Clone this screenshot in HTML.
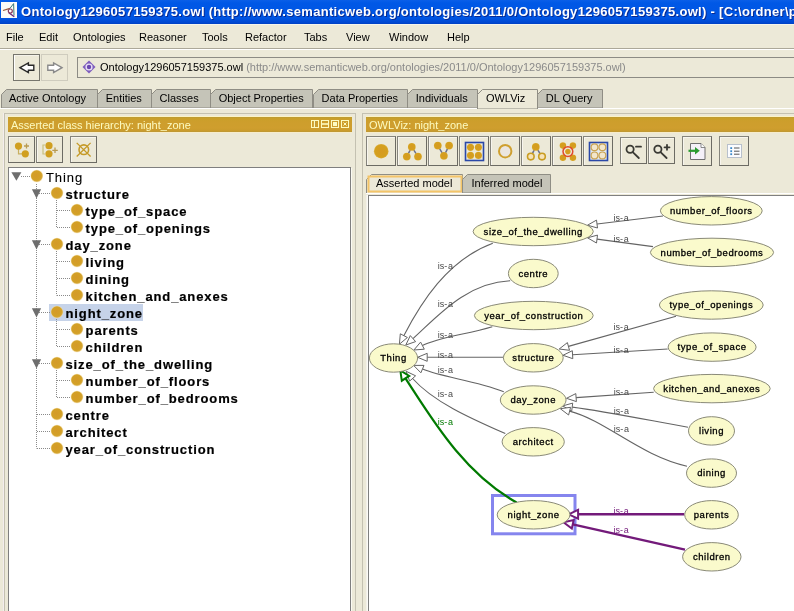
<!DOCTYPE html>
<html><head><meta charset="utf-8">
<style>
*{margin:0;padding:0;box-sizing:border-box}
body{will-change:transform}
html,body{width:794px;height:611px;overflow:hidden;background:#ece9d8;font-family:"Liberation Sans",sans-serif;font-size:11px;color:#000}
.a{position:absolute}
#title{left:0;top:0;width:794px;height:24px;background:linear-gradient(#0a5fe8 0,#0058e6 3px,#0055e3 18px,#0046cf 23px,#0040c0 24px)}
#title .t{left:21px;top:4px;font-weight:bold;font-size:13px;color:#fff;white-space:nowrap;letter-spacing:0.3px;text-shadow:1px 1px 0 #0a2a90}
.menu{top:30.7px;line-height:13px;white-space:nowrap}
.tab{top:89px;height:19px;background:#c6c5b9;border-top:1px solid #8f8e85;border-right:1px solid #8f8e85;white-space:nowrap}
.tab span{position:absolute;top:3px}
.tree{font-weight:bold;font-size:13px;letter-spacing:0.88px;white-space:nowrap;-webkit-text-stroke:0.2px #000}
.dot{width:13px;height:13px;border-radius:50%;background:#d19f2c;box-shadow:0 0 0 0.5px #e8c77a}
</style></head><body>
<!-- title bar -->
<div id="title" class="a">
  <svg class="a" style="left:1px;top:2px" width="16" height="16" viewBox="0 0 16 16">
    <rect x="0" y="0" width="16" height="16" fill="#fbfbf8"/>
    <path d="M2 8.5 L9 6.3" stroke="#9a5a3a" stroke-width="1.3" fill="none"/>
    <path d="M9 6.3 L12.6 1.6 L13 13.5" stroke="#3a7a7a" stroke-width="1" fill="none"/>
    <path d="M7.5 10.5 L13.3 14.8" stroke="#6a2a7a" stroke-width="1.4" fill="none"/>
    <circle cx="9.3" cy="9" r="2" fill="#fff" stroke="#8a3a5a" stroke-width="1.2"/>
  </svg>
  <div class="a t">Ontology1296057159375.owl (http://www.semanticweb.org/ontologies/2011/0/Ontology1296057159375.owl) - [C:\ordner\protege</div>
</div>
<div class="a" style="left:0;top:24px;width:794px;height:1px;background:#f6f4ec"></div>
<!-- menu -->
<div class="a menu" style="left:6px">File</div>
<div class="a menu" style="left:39px">Edit</div>
<div class="a menu" style="left:73px">Ontologies</div>
<div class="a menu" style="left:139px">Reasoner</div>
<div class="a menu" style="left:202px">Tools</div>
<div class="a menu" style="left:245px">Refactor</div>
<div class="a menu" style="left:304px">Tabs</div>
<div class="a menu" style="left:346px">View</div>
<div class="a menu" style="left:389px">Window</div>
<div class="a menu" style="left:447px">Help</div>
<div class="a" style="left:0;top:48px;width:794px;height:1px;background:#aca899"></div>
<div class="a" style="left:0;top:49px;width:794px;height:1px;background:#fff"></div>
<!-- nav buttons -->
<div class="a" style="left:13px;top:54px;width:27px;height:27px;border:1px solid #77766e;"></div>
<div class="a" style="left:14px;top:55px;width:25px;height:25px;border-left:1px solid #fff;border-top:1px solid #f4f2ea;"></div>
<svg class="a" style="left:18px;top:59px" width="18" height="18" viewBox="0 0 18 18"><path d="M2 8.7 L10.4 3.9 V6.2 H15.8 V11.2 H10.4 V13.5 Z" fill="#fff" stroke="#2a2a2a" stroke-width="1.4" stroke-linejoin="miter"/></svg>
<div class="a" style="left:41px;top:54px;width:27px;height:27px;border:1px solid #cfccbe;"></div>
<svg class="a" style="left:44px;top:59px" width="20" height="18" viewBox="0 0 20 18"><path d="M18 8.7 L9.6 3.9 V6.2 H3.8 V11.2 H9.6 V13.5 Z" fill="#fff" stroke="#8a8a8a" stroke-width="1.4" stroke-linejoin="miter"/></svg>
<!-- address -->
<div class="a" style="left:77px;top:57px;width:717px;height:21px;border-top:1px solid #8c8b84;border-left:1px solid #8c8b84;border-bottom:1px solid #8c8b84;background:#ece9d8"></div>

<svg class="a" style="left:82px;top:60px" width="14" height="14" viewBox="0 0 14 14"><path d="M7 0.5 L13.5 7 L7 13.5 L0.5 7 Z" fill="#7e5dbd"/><circle cx="7" cy="7" r="3.6" fill="#e8e0f5"/><circle cx="7" cy="7" r="2.2" fill="#6a48b0"/></svg>
<div class="a" style="left:100px;top:61px;white-space:nowrap">Ontology1296057159375.owl <span style="color:#8a8a8a">(http://www.semanticweb.org/ontologies/2011/0/Ontology1296057159375.owl)</span></div>
<!-- tabs -->
<div class="a" style="left:0;top:108px;width:794px;height:1px;background:#fff"></div>
<svg class="a" style="left:1px;top:89px" width="97" height="19"><polygon points="0.5,19 0.5,5.5 5.5,0.5 96.5,0.5 96.5,19" fill="#c5c4b8" stroke="#8f8d84" stroke-width="1"/></svg>
<svg class="a" style="left:97px;top:89px" width="55" height="19"><polygon points="0.5,19 0.5,5.5 5.5,0.5 54.5,0.5 54.5,19" fill="#c5c4b8" stroke="#8f8d84" stroke-width="1"/></svg>
<svg class="a" style="left:151px;top:89px" width="60" height="19"><polygon points="0.5,19 0.5,5.5 5.5,0.5 59.5,0.5 59.5,19" fill="#c5c4b8" stroke="#8f8d84" stroke-width="1"/></svg>
<svg class="a" style="left:210px;top:89px" width="103" height="19"><polygon points="0.5,19 0.5,5.5 5.5,0.5 102.5,0.5 102.5,19" fill="#c5c4b8" stroke="#8f8d84" stroke-width="1"/></svg>
<svg class="a" style="left:313px;top:89px" width="95" height="19"><polygon points="0.5,19 0.5,5.5 5.5,0.5 94.5,0.5 94.5,19" fill="#c5c4b8" stroke="#8f8d84" stroke-width="1"/></svg>
<svg class="a" style="left:407px;top:89px" width="71" height="19"><polygon points="0.5,19 0.5,5.5 5.5,0.5 70.5,0.5 70.5,19" fill="#c5c4b8" stroke="#8f8d84" stroke-width="1"/></svg>
<svg class="a" style="left:477px;top:89px" width="61" height="20"><polygon points="0.5,20 0.5,5.5 5.5,0.5 60.5,0.5 60.5,20" fill="#ece9d8" stroke="#8f8d84" stroke-width="1"/></svg>
<svg class="a" style="left:537px;top:89px" width="66" height="19"><polygon points="0.5,19 0.5,5.5 5.5,0.5 65.5,0.5 65.5,19" fill="#c5c4b8" stroke="#8f8d84" stroke-width="1"/></svg>
<div class="a" style="left:9px;top:92.3px;line-height:13px;white-space:nowrap">Active Ontology</div>
<div class="a" style="left:105.7px;top:92.3px;line-height:13px;white-space:nowrap">Entities</div>
<div class="a" style="left:159.6px;top:92.3px;line-height:13px;white-space:nowrap">Classes</div>
<div class="a" style="left:218.7px;top:92.3px;line-height:13px;white-space:nowrap">Object Properties</div>
<div class="a" style="left:321.6px;top:92.3px;line-height:13px;white-space:nowrap">Data Properties</div>
<div class="a" style="left:415.8px;top:92.3px;line-height:13px;white-space:nowrap">Individuals</div>
<div class="a" style="left:485.9px;top:92.3px;line-height:13px;white-space:nowrap">OWLViz</div>
<div class="a" style="left:545.8px;top:92.3px;line-height:13px;white-space:nowrap">DL Query</div>
<!-- LEFT PANEL -->
<div class="a" style="left:4px;top:113px;width:352px;height:500px;border:1px solid #c4c1b1;border-bottom:none"></div>
<div class="a" style="left:3px;top:113px;width:1px;height:500px;background:#f4eeee"></div>
<div class="a" style="left:8px;top:116px;width:344px;height:1px;background:#fbf3c8"></div>
<div class="a" style="left:8px;top:117px;width:344px;height:15px;background:linear-gradient(#b89838 0,#c8a02a 1px,#cd9e2c 4px,#cf9e2e 11px,#c99b2c 14px,#b8963a 15px)"></div>
<div class="a" style="left:8px;top:132px;width:344px;height:1px;background:#f6eccc"></div>
<div class="a" style="left:11px;top:118.6px;line-height:13px;color:#fdfbc0;white-space:nowrap">Asserted class hierarchy: night_zone</div>
<svg class="a" style="left:311px;top:120px" width="38" height="8" viewBox="0 0 38 8">
 <g fill="none" stroke="#fdfbc0" stroke-width="1">
  <rect x="0.5" y="0.5" width="7" height="7"/><line x1="3.5" y1="1" x2="3.5" y2="7" stroke-width="1.2"/><line x1="4.5" y1="1" x2="4.5" y2="7" stroke="#c09a3a"/>
  <rect x="10.5" y="0.5" width="7" height="7"/><line x1="11" y1="4" x2="17" y2="4" stroke-width="1.6"/>
  <rect x="20.5" y="0.5" width="7" height="7"/><rect x="22.5" y="2.5" width="3" height="3" fill="#fdfbc0"/>
  <rect x="30.5" y="0.5" width="7" height="7"/><path d="M32.5 2.5 L35.5 5.5 M35.5 2.5 L32.5 5.5"/>
 </g>
</svg>
<!-- left toolbar -->
<div class="a" style="left:8px;top:136px;width:27px;height:27px;border:1px solid #85847c;border-right-color:#6c6b64;border-bottom-color:#6c6b64;box-shadow:inset 1px 1px 0 #f7f5ee"></div>
<div class="a" style="left:36px;top:136px;width:27px;height:27px;border:1px solid #85847c;border-right-color:#6c6b64;border-bottom-color:#6c6b64;box-shadow:inset 1px 1px 0 #f7f5ee"></div>
<div class="a" style="left:70px;top:136px;width:27px;height:27px;border:1px solid #85847c;border-right-color:#6c6b64;border-bottom-color:#6c6b64;box-shadow:inset 1px 1px 0 #f7f5ee"></div>
<svg class="a" style="left:0;top:0" width="100" height="170">
 <g fill="#d09f20">
  <path d="M18.5 146 V153.8 H25" fill="none" stroke="#c8b060" stroke-width="1.2"/>
  <circle cx="18.5" cy="146.1" r="3.6"/><circle cx="25.3" cy="153.8" r="3.6"/>
  <path d="M26.5 143.5 v5 M24 146 h5" stroke="#b89a50" stroke-width="1.3"/>
  <path d="M45 145 H43 V154 H45" fill="none" stroke="#c8c080" stroke-width="1.2"/>
  <circle cx="49" cy="145.7" r="3.6"/><circle cx="49" cy="153.8" r="3.6"/>
  <path d="M55 147.5 v5.5 M52.3 150.3 h5.5" stroke="#b89a50" stroke-width="1.3"/>
 </g>
 <g stroke="#c59a28" fill="none" stroke-width="1.6">
  <circle cx="83.8" cy="149.7" r="4.8"/>
  <path d="M76.7 142.9 L90.6 156.5 M90.6 142.9 L76.7 156.5" stroke-width="1.3"/>
 </g>
</svg>
<!-- tree area -->
<div class="a" style="left:8px;top:167px;width:343px;height:450px;background:#fff;border-left:1px solid #7f7f7f;border-top:1px solid #7f7f7f;border-right:1px solid #7f7f7f"></div>
<div class="a" style="left:49px;top:304px;width:94px;height:17px;background:#c6d3e9"></div>
<svg class="a" style="left:0;top:0" width="360" height="611"><defs><radialGradient id="gd" cx="0.45" cy="0.45" r="0.6"><stop offset="0" stop-color="#d49a28"/><stop offset="0.7" stop-color="#d3a126"/><stop offset="1" stop-color="#d9ae50"/></radialGradient></defs><line x1="36.5" y1="184" x2="36.5" y2="448.5" stroke="#8a8a8a" stroke-width="1" stroke-dasharray="1 1"/><line x1="21" y1="176.5" x2="31" y2="176.5" stroke="#8a8a8a" stroke-width="1" stroke-dasharray="1 1"/><path d="M11.4 172.2 H21.4 L16.4 180.8 Z" fill="#6e6e6e"/><circle cx="36.8" cy="176" r="6.3" fill="#f3dc9c" opacity="0.7"/><circle cx="36.8" cy="176" r="5.8" fill="url(#gd)"/><line x1="37" y1="193.5" x2="51" y2="193.5" stroke="#8a8a8a" stroke-width="1" stroke-dasharray="1 1"/><line x1="56.5" y1="200" x2="56.5" y2="227.5" stroke="#8a8a8a" stroke-width="1" stroke-dasharray="1 1"/><path d="M31.9 189.2 H41.1 L36.5 198.4 Z" fill="#6e6e6e"/><circle cx="57" cy="193" r="6.3" fill="#f3dc9c" opacity="0.7"/><circle cx="57" cy="193" r="5.8" fill="url(#gd)"/><line x1="57" y1="210.5" x2="71" y2="210.5" stroke="#8a8a8a" stroke-width="1" stroke-dasharray="1 1"/><circle cx="77" cy="210" r="6.3" fill="#f3dc9c" opacity="0.7"/><circle cx="77" cy="210" r="5.8" fill="url(#gd)"/><line x1="57" y1="227.5" x2="71" y2="227.5" stroke="#8a8a8a" stroke-width="1" stroke-dasharray="1 1"/><circle cx="77" cy="227" r="6.3" fill="#f3dc9c" opacity="0.7"/><circle cx="77" cy="227" r="5.8" fill="url(#gd)"/><line x1="37" y1="244.5" x2="51" y2="244.5" stroke="#8a8a8a" stroke-width="1" stroke-dasharray="1 1"/><line x1="56.5" y1="251" x2="56.5" y2="295.5" stroke="#8a8a8a" stroke-width="1" stroke-dasharray="1 1"/><path d="M31.9 240.2 H41.1 L36.5 249.4 Z" fill="#6e6e6e"/><circle cx="57" cy="244" r="6.3" fill="#f3dc9c" opacity="0.7"/><circle cx="57" cy="244" r="5.8" fill="url(#gd)"/><line x1="57" y1="261.5" x2="71" y2="261.5" stroke="#8a8a8a" stroke-width="1" stroke-dasharray="1 1"/><circle cx="77" cy="261" r="6.3" fill="#f3dc9c" opacity="0.7"/><circle cx="77" cy="261" r="5.8" fill="url(#gd)"/><line x1="57" y1="278.5" x2="71" y2="278.5" stroke="#8a8a8a" stroke-width="1" stroke-dasharray="1 1"/><circle cx="77" cy="278" r="6.3" fill="#f3dc9c" opacity="0.7"/><circle cx="77" cy="278" r="5.8" fill="url(#gd)"/><line x1="57" y1="295.5" x2="71" y2="295.5" stroke="#8a8a8a" stroke-width="1" stroke-dasharray="1 1"/><circle cx="77" cy="295" r="6.3" fill="#f3dc9c" opacity="0.7"/><circle cx="77" cy="295" r="5.8" fill="url(#gd)"/><line x1="37" y1="312.5" x2="51" y2="312.5" stroke="#8a8a8a" stroke-width="1" stroke-dasharray="1 1"/><line x1="56.5" y1="319" x2="56.5" y2="346.5" stroke="#8a8a8a" stroke-width="1" stroke-dasharray="1 1"/><path d="M31.9 308.2 H41.1 L36.5 317.4 Z" fill="#6e6e6e"/><circle cx="57" cy="312" r="6.3" fill="#f3dc9c" opacity="0.7"/><circle cx="57" cy="312" r="5.8" fill="url(#gd)"/><line x1="57" y1="329.5" x2="71" y2="329.5" stroke="#8a8a8a" stroke-width="1" stroke-dasharray="1 1"/><circle cx="77" cy="329" r="6.3" fill="#f3dc9c" opacity="0.7"/><circle cx="77" cy="329" r="5.8" fill="url(#gd)"/><line x1="57" y1="346.5" x2="71" y2="346.5" stroke="#8a8a8a" stroke-width="1" stroke-dasharray="1 1"/><circle cx="77" cy="346" r="6.3" fill="#f3dc9c" opacity="0.7"/><circle cx="77" cy="346" r="5.8" fill="url(#gd)"/><line x1="37" y1="363.5" x2="51" y2="363.5" stroke="#8a8a8a" stroke-width="1" stroke-dasharray="1 1"/><line x1="56.5" y1="370" x2="56.5" y2="397.5" stroke="#8a8a8a" stroke-width="1" stroke-dasharray="1 1"/><path d="M31.9 359.2 H41.1 L36.5 368.4 Z" fill="#6e6e6e"/><circle cx="57" cy="363" r="6.3" fill="#f3dc9c" opacity="0.7"/><circle cx="57" cy="363" r="5.8" fill="url(#gd)"/><line x1="57" y1="380.5" x2="71" y2="380.5" stroke="#8a8a8a" stroke-width="1" stroke-dasharray="1 1"/><circle cx="77" cy="380" r="6.3" fill="#f3dc9c" opacity="0.7"/><circle cx="77" cy="380" r="5.8" fill="url(#gd)"/><line x1="57" y1="397.5" x2="71" y2="397.5" stroke="#8a8a8a" stroke-width="1" stroke-dasharray="1 1"/><circle cx="77" cy="397" r="6.3" fill="#f3dc9c" opacity="0.7"/><circle cx="77" cy="397" r="5.8" fill="url(#gd)"/><line x1="37" y1="414.5" x2="51" y2="414.5" stroke="#8a8a8a" stroke-width="1" stroke-dasharray="1 1"/><circle cx="57" cy="414" r="6.3" fill="#f3dc9c" opacity="0.7"/><circle cx="57" cy="414" r="5.8" fill="url(#gd)"/><line x1="37" y1="431.5" x2="51" y2="431.5" stroke="#8a8a8a" stroke-width="1" stroke-dasharray="1 1"/><circle cx="57" cy="431" r="6.3" fill="#f3dc9c" opacity="0.7"/><circle cx="57" cy="431" r="5.8" fill="url(#gd)"/><line x1="37" y1="448.5" x2="51" y2="448.5" stroke="#8a8a8a" stroke-width="1" stroke-dasharray="1 1"/><circle cx="57" cy="448" r="6.3" fill="#f3dc9c" opacity="0.7"/><circle cx="57" cy="448" r="5.8" fill="url(#gd)"/></svg>
<div class="a tree" style="left:46px;top:169.6px;line-height:15px;font-weight:normal;letter-spacing:0.9px;-webkit-text-stroke:0.1px #000">Thing</div>
<div class="a tree" style="left:65.5px;top:186.6px;line-height:15px;">structure</div>
<div class="a tree" style="left:85.6px;top:203.6px;line-height:15px;">type_of_space</div>
<div class="a tree" style="left:85.6px;top:220.6px;line-height:15px;">type_of_openings</div>
<div class="a tree" style="left:65.5px;top:237.6px;line-height:15px;">day_zone</div>
<div class="a tree" style="left:85.6px;top:254.6px;line-height:15px;">living</div>
<div class="a tree" style="left:85.6px;top:271.6px;line-height:15px;">dining</div>
<div class="a tree" style="left:85.6px;top:288.6px;line-height:15px;">kitchen_and_anexes</div>
<div class="a tree" style="left:65.5px;top:305.6px;line-height:15px;">night_zone</div>
<div class="a tree" style="left:85.6px;top:322.6px;line-height:15px;">parents</div>
<div class="a tree" style="left:85.6px;top:339.6px;line-height:15px;">children</div>
<div class="a tree" style="left:65.5px;top:356.6px;line-height:15px;">size_of_the_dwelling</div>
<div class="a tree" style="left:85.6px;top:373.6px;line-height:15px;">number_of_floors</div>
<div class="a tree" style="left:85.6px;top:390.6px;line-height:15px;">number_of_bedrooms</div>
<div class="a tree" style="left:65.5px;top:407.6px;line-height:15px;">centre</div>
<div class="a tree" style="left:65.5px;top:424.6px;line-height:15px;">architect</div>
<div class="a tree" style="left:65.5px;top:441.6px;line-height:15px;">year_of_construction</div>


<div class="a" style="left:351px;top:168px;width:1px;height:450px;background:#fbfaf2"></div>
<div class="a" style="left:366px;top:195px;width:1px;height:420px;background:#f3f1ea"></div>
<div class="a" style="left:367px;top:195px;width:1px;height:420px;background:#fcfbf6"></div>
<!-- RIGHT PANEL -->
<div class="a" style="left:362px;top:113px;width:440px;height:500px;border:1px solid #c4c1b1;border-bottom:none;border-right:none"></div>
<div class="a" style="left:366px;top:116px;width:430px;height:1px;background:#fbf3c8"></div>
<div class="a" style="left:366px;top:117px;width:430px;height:15px;background:linear-gradient(#b89838 0,#c8a02a 1px,#cd9e2c 4px,#cf9e2e 11px,#c99b2c 14px,#b8963a 15px)"></div>
<div class="a" style="left:366px;top:132px;width:430px;height:1px;background:#f6eccc"></div>
<div class="a" style="left:369px;top:118.6px;line-height:13px;color:#fdfbc0;white-space:nowrap">OWLViz: night_zone</div>
<div class="a" style="left:366px;top:136px;width:30px;height:30px;border:1px solid #85847c;border-right-color:#6c6b64;border-bottom-color:#6c6b64;box-shadow:inset 1px 1px 0 #f7f5ee"></div>
<div class="a" style="left:397px;top:136px;width:30px;height:30px;border:1px solid #85847c;border-right-color:#6c6b64;border-bottom-color:#6c6b64;box-shadow:inset 1px 1px 0 #f7f5ee"></div>
<div class="a" style="left:428px;top:136px;width:30px;height:30px;border:1px solid #85847c;border-right-color:#6c6b64;border-bottom-color:#6c6b64;box-shadow:inset 1px 1px 0 #f7f5ee"></div>
<div class="a" style="left:459px;top:136px;width:30px;height:30px;border:1px solid #85847c;border-right-color:#6c6b64;border-bottom-color:#6c6b64;box-shadow:inset 1px 1px 0 #f7f5ee"></div>
<div class="a" style="left:490px;top:136px;width:30px;height:30px;border:1px solid #85847c;border-right-color:#6c6b64;border-bottom-color:#6c6b64;box-shadow:inset 1px 1px 0 #f7f5ee"></div>
<div class="a" style="left:521px;top:136px;width:30px;height:30px;border:1px solid #85847c;border-right-color:#6c6b64;border-bottom-color:#6c6b64;box-shadow:inset 1px 1px 0 #f7f5ee"></div>
<div class="a" style="left:552px;top:136px;width:30px;height:30px;border:1px solid #85847c;border-right-color:#6c6b64;border-bottom-color:#6c6b64;box-shadow:inset 1px 1px 0 #f7f5ee"></div>
<div class="a" style="left:583px;top:136px;width:30px;height:30px;border:1px solid #85847c;border-right-color:#6c6b64;border-bottom-color:#6c6b64;box-shadow:inset 1px 1px 0 #f7f5ee"></div>
<div class="a" style="left:620px;top:137px;width:27px;height:27px;border:1px solid #85847c;border-right-color:#6c6b64;border-bottom-color:#6c6b64;box-shadow:inset 1px 1px 0 #f7f5ee"></div>
<div class="a" style="left:648px;top:137px;width:27px;height:27px;border:1px solid #85847c;border-right-color:#6c6b64;border-bottom-color:#6c6b64;box-shadow:inset 1px 1px 0 #f7f5ee"></div>
<div class="a" style="left:682px;top:136px;width:30px;height:30px;border:1px solid #85847c;border-right-color:#6c6b64;border-bottom-color:#6c6b64;box-shadow:inset 1px 1px 0 #f7f5ee"></div>
<div class="a" style="left:719px;top:136px;width:30px;height:30px;border:1px solid #85847c;border-right-color:#6c6b64;border-bottom-color:#6c6b64;box-shadow:inset 1px 1px 0 #f7f5ee"></div>
<svg class="a" style="left:360px;top:130px" width="434" height="40" viewBox="360 130 434 40">
<defs><radialGradient id="g2" cx="0.5" cy="0.5" r="0.55"><stop offset="0" stop-color="#d69a20"/><stop offset="0.75" stop-color="#d4a01e"/><stop offset="1" stop-color="#e2b850"/></radialGradient></defs>
<circle cx="381.2" cy="151.2" r="7.3" fill="url(#g2)"/>
<g stroke="#6a7090" stroke-width="1.5"><path d="M411.8 146.9 L406.8 156.6 M411.8 146.9 L418 156.6"/><path d="M437.8 145.6 L443.9 155.8 M449.1 145.6 L443.9 155.8"/><path d="M535.8 146.9 L530.8 156.6 M535.8 146.9 L542 156.6"/></g>
<g fill="url(#g2)">
<circle cx="411.8" cy="146.9" r="3.9"/><circle cx="406.8" cy="156.6" r="3.9"/><circle cx="418" cy="156.6" r="3.9"/>
<circle cx="437.8" cy="145.6" r="3.9"/><circle cx="449.1" cy="145.6" r="3.9"/><circle cx="443.9" cy="155.8" r="3.9"/>
<circle cx="470.5" cy="147.3" r="3.6"/><circle cx="478.4" cy="147.3" r="3.6"/><circle cx="470.5" cy="155.4" r="3.6"/><circle cx="478.4" cy="155.4" r="3.6"/>
<circle cx="535.8" cy="146.9" r="3.9"/>
<circle cx="562.9" cy="145.6" r="3.3"/><circle cx="572.9" cy="145.6" r="3.3"/><circle cx="562.9" cy="157.7" r="3.3"/><circle cx="572.9" cy="157.7" r="3.3"/>
<circle cx="567.9" cy="151.6" r="2.8"/>
</g>
<rect x="465.5" y="142.5" width="18" height="18" fill="none" stroke="#2a48a8" stroke-width="1.6"/>
<circle cx="505.2" cy="151.2" r="6.2" fill="#ebe6e0" stroke="#cfa030" stroke-width="2"/>
<circle cx="530.8" cy="156.6" r="3.3" fill="#f6e2b8" stroke="#c99d22" stroke-width="1.6"/><circle cx="542" cy="156.6" r="3.3" fill="#f6e2b8" stroke="#c99d22" stroke-width="1.6"/>
<circle cx="567.9" cy="151.6" r="4.9" fill="none" stroke="#e04a2c" stroke-width="1.5"/>
<rect x="589.5" y="142.5" width="18" height="18" fill="#e4ecf4" stroke="#2a48a8" stroke-width="1.6"/>
<g fill="#f2e6cc" stroke="#c9a252" stroke-width="1.2"><circle cx="594.5" cy="147.3" r="3.4"/><circle cx="602.4" cy="147.3" r="3.4"/><circle cx="594.5" cy="155.4" r="3.4"/><circle cx="602.4" cy="155.4" r="3.4"/></g>
<g stroke="#3a3a34" stroke-width="1.8" fill="none" stroke-linecap="round"><circle cx="630.1" cy="149.3" r="3.6"/><path d="M633 152.3 L638.8 158"/><path d="M636 146.7 H641"/>
<circle cx="657.9" cy="149.3" r="3.6"/><path d="M660.8 152.3 L666.6 158"/><path d="M664.5 147.3 H669.5 M667 144.8 V149.8"/></g>
<path d="M690.5 143.5 H701 L705 147.5 V159.5 H690.5 Z" fill="#f4f0f8" stroke="#6f6f6f" stroke-width="1"/><path d="M701 143.5 V147.5 H705" fill="#fff" stroke="#6f6f6f" stroke-width="0.8"/>
<path d="M688.5 150.8 H696" stroke="#2a9a30" stroke-width="2.2"/><path d="M695 147 L699.8 150.8 L695 154.6 Z" fill="#2a9a30"/>
<rect x="727.5" y="144.5" width="14" height="13" fill="#fbfcff" stroke="#b8c0cc" stroke-width="1"/>
<g fill="#3a88c8"><rect x="730.3" y="147.2" width="1.8" height="1.8"/><rect x="730.3" y="150.3" width="1.8" height="1.8"/><rect x="730.3" y="153.3" width="1.8" height="1.8"/></g>
<g stroke="#555" stroke-width="1"><path d="M734 148 H739.5 M734 151.2 H739.5 M734 154.2 H739.5"/></g>
</svg>
<svg class="a" style="left:366px;top:173px" width="100" height="21"><polygon points="0.5,20.5 0.5,6.5 5.5,1.5 96.5,1.5 96.5,20.5" fill="#ece9d8" stroke="#8f8e85"/><rect x="2.5" y="3.5" width="93" height="15" fill="none" stroke="#f3c468" stroke-width="2"/></svg>
<div class="a" style="left:376px;top:176.7px;line-height:13px;white-space:nowrap">Asserted model</div>
<svg class="a" style="left:462px;top:173px" width="90" height="21"><polygon points="0.5,20 0.5,6.5 5.5,1.5 88.5,1.5 88.5,20" fill="#c5c4b8" stroke="#8f8e85"/></svg>
<div class="a" style="left:471.5px;top:176.7px;line-height:13px;white-space:nowrap">Inferred model</div>
<div class="a" style="left:366px;top:193px;width:430px;height:1px;background:#fff"></div>
<div class="a" style="left:368px;top:195px;width:430px;height:420px;background:#fff;border-left:1px solid #808080;border-top:1px solid #808080"></div>

<!--GRAPH-->
<svg class="a" style="left:0;top:0" width="794" height="611"><defs><clipPath id="gc"><rect x="369" y="196" width="425" height="415"/></clipPath></defs><g clip-path="url(#gc)">
<rect x="492.5" y="495.5" width="82.5" height="38.3" fill="none" stroke="#8585ee" stroke-width="3"/>
<path d="M663.0 216.0 L597.0 224.0" fill="none" stroke="#646464" stroke-width="1.1"/>
<polygon points="587.5,225.2 596.5,220.1 597.5,228.0" fill="#fff" stroke="#646464" stroke-width="1" stroke-linejoin="miter"/>
<text x="613.4" y="220.8" font-size="9" fill="#4a4a4a">is-<tspan dx="0.8">a</tspan></text>
<path d="M653.0 246.6 L597.0 239.1" fill="none" stroke="#646464" stroke-width="1.1"/>
<polygon points="587.5,237.8 597.5,235.1 596.5,243.0" fill="#fff" stroke="#646464" stroke-width="1" stroke-linejoin="miter"/>
<text x="613.4" y="242" font-size="9" fill="#4a4a4a">is-<tspan dx="0.8">a</tspan></text>
<path d="M492.8 243.3 C447.0 260.0 420.6 303.6 403.8 335.7" fill="none" stroke="#646464" stroke-width="1.1"/>
<polygon points="399.4,344.2 400.3,333.8 407.4,337.5" fill="#fff" stroke="#646464" stroke-width="1" stroke-linejoin="miter"/>
<text x="437.7" y="268.8" font-size="9" fill="#4a4a4a">is-<tspan dx="0.8">a</tspan></text>
<path d="M510.2 280.8 C465.5 282.6 436.0 318.1 413.0 338.6" fill="none" stroke="#646464" stroke-width="1.1"/>
<polygon points="405.8,345.0 410.3,335.6 415.6,341.6" fill="#fff" stroke="#646464" stroke-width="1" stroke-linejoin="miter"/>
<text x="437.7" y="307" font-size="9" fill="#4a4a4a">is-<tspan dx="0.8">a</tspan></text>
<path d="M492.3 326.7 C466.4 334.4 438.3 337.5 422.4 345.6" fill="none" stroke="#646464" stroke-width="1.1"/>
<polygon points="413.9,350.0 420.6,342.1 424.3,349.2" fill="#fff" stroke="#646464" stroke-width="1" stroke-linejoin="miter"/>
<text x="437.7" y="338" font-size="9" fill="#4a4a4a">is-<tspan dx="0.8">a</tspan></text>
<path d="M503.0 357.3 L427.2 357.3" fill="none" stroke="#646464" stroke-width="1.1"/>
<polygon points="417.6,357.3 427.2,353.3 427.2,361.3" fill="#fff" stroke="#646464" stroke-width="1" stroke-linejoin="miter"/>
<text x="437.7" y="357.7" font-size="9" fill="#4a4a4a">is-<tspan dx="0.8">a</tspan></text>
<path d="M503.8 391.7 C474.6 380.1 442.6 377.6 422.5 369.1" fill="none" stroke="#646464" stroke-width="1.1"/>
<polygon points="413.6,365.4 424.0,365.4 420.9,372.8" fill="#fff" stroke="#646464" stroke-width="1" stroke-linejoin="miter"/>
<text x="437.7" y="372.8" font-size="9" fill="#4a4a4a">is-<tspan dx="0.8">a</tspan></text>
<path d="M505.3 433.6 C469.2 417.8 433.0 401.5 412.6 378.5" fill="none" stroke="#646464" stroke-width="1.1"/>
<polygon points="406.2,371.3 415.6,375.8 409.6,381.1" fill="#fff" stroke="#646464" stroke-width="1" stroke-linejoin="miter"/>
<text x="437.7" y="397" font-size="9" fill="#4a4a4a">is-<tspan dx="0.8">a</tspan></text>
<path d="M516.6 502.5 C463.5 472.7 432.4 419.5 405.5 378.3" fill="none" stroke="#007a00" stroke-width="2.2"/>
<polygon points="400.3,370.3 409.2,375.9 401.8,380.7" fill="#fff" stroke="#007a00" stroke-width="2" stroke-linejoin="miter"/>
<text x="437.7" y="425" font-size="9" fill="#007a00">is-<tspan dx="0.8">a</tspan></text>
<path d="M676.0 316.3 L568.4 346.4" fill="none" stroke="#646464" stroke-width="1.1"/>
<polygon points="559.2,349.0 567.4,342.6 569.5,350.3" fill="#fff" stroke="#646464" stroke-width="1" stroke-linejoin="miter"/>
<text x="613.5" y="329.6" font-size="9" fill="#4a4a4a">is-<tspan dx="0.8">a</tspan></text>
<path d="M667.7 349.0 L572.6 354.7" fill="none" stroke="#646464" stroke-width="1.1"/>
<polygon points="563.0,355.3 572.3,350.7 572.8,358.7" fill="#fff" stroke="#646464" stroke-width="1" stroke-linejoin="miter"/>
<text x="613.5" y="352.6" font-size="9" fill="#4a4a4a">is-<tspan dx="0.8">a</tspan></text>
<path d="M653.7 392.2 L576.1 397.6" fill="none" stroke="#646464" stroke-width="1.1"/>
<polygon points="566.5,398.3 575.8,393.6 576.4,401.6" fill="#fff" stroke="#646464" stroke-width="1" stroke-linejoin="miter"/>
<text x="613.8" y="394.7" font-size="9" fill="#4a4a4a">is-<tspan dx="0.8">a</tspan></text>
<path d="M688.0 427.3 C646.3 419.8 604.8 411.3 572.2 407.1" fill="none" stroke="#646464" stroke-width="1.1"/>
<polygon points="562.7,405.9 572.7,403.1 571.7,411.1" fill="#fff" stroke="#646464" stroke-width="1" stroke-linejoin="miter"/>
<text x="613.8" y="413.9" font-size="9" fill="#4a4a4a">is-<tspan dx="0.8">a</tspan></text>
<path d="M687.0 466.2 C640.4 455.9 606.0 420.6 569.6 411.1" fill="none" stroke="#646464" stroke-width="1.1"/>
<polygon points="560.3,408.7 570.6,407.3 568.6,415.0" fill="#fff" stroke="#646464" stroke-width="1" stroke-linejoin="miter"/>
<text x="613.8" y="431.6" font-size="9" fill="#4a4a4a">is-<tspan dx="0.8">a</tspan></text>
<path d="M684.3 514.3 L578.1 514.3" fill="none" stroke="#731a7a" stroke-width="2.4"/>
<polygon points="568.6,514.3 578.1,509.9 578.1,518.7" fill="#fff" stroke="#731a7a" stroke-width="2" stroke-linejoin="miter"/>
<text x="613.4" y="514.1" font-size="9" fill="#731a7a">is-<tspan dx="0.8">a</tspan></text>
<path d="M685.0 549.6 L572.8 524.3" fill="none" stroke="#731a7a" stroke-width="2.4"/>
<polygon points="563.5,522.2 573.7,520.0 571.8,528.6" fill="#fff" stroke="#731a7a" stroke-width="2" stroke-linejoin="miter"/>
<text x="613.4" y="533.2" font-size="9" fill="#731a7a">is-<tspan dx="0.8">a</tspan></text>
<ellipse cx="533.2" cy="231.5" rx="60.1" ry="14.2" fill="#fafacc" stroke="#8a8a78" stroke-width="1"/>
<text x="533.2" y="234.6" text-anchor="middle" font-size="9.5" stroke="#000" stroke-width="0.3" letter-spacing="0.55">size_of_the_dwelling</text>
<ellipse cx="711.3" cy="210.8" rx="50.9" ry="14.2" fill="#fafacc" stroke="#8a8a78" stroke-width="1"/>
<text x="711.3" y="213.9" text-anchor="middle" font-size="9.5" stroke="#000" stroke-width="0.3" letter-spacing="0.55">number_of_floors</text>
<ellipse cx="712" cy="252.4" rx="61.6" ry="14.2" fill="#fafacc" stroke="#8a8a78" stroke-width="1"/>
<text x="712" y="255.5" text-anchor="middle" font-size="9.5" stroke="#000" stroke-width="0.3" letter-spacing="0.55">number_of_bedrooms</text>
<ellipse cx="533.3" cy="273.5" rx="24.900000000000002" ry="14.2" fill="#fafacc" stroke="#8a8a78" stroke-width="1"/>
<text x="533.3" y="276.6" text-anchor="middle" font-size="9.5" stroke="#000" stroke-width="0.3" letter-spacing="0.55">centre</text>
<ellipse cx="533.8" cy="315.5" rx="59.4" ry="14.2" fill="#fafacc" stroke="#8a8a78" stroke-width="1"/>
<text x="533.8" y="318.6" text-anchor="middle" font-size="9.5" stroke="#000" stroke-width="0.3" letter-spacing="0.55">year_of_construction</text>
<ellipse cx="393.5" cy="358" rx="24.1" ry="14.2" fill="#fafacc" stroke="#8a8a78" stroke-width="1"/>
<text x="393.5" y="361.1" text-anchor="middle" font-size="9.5" stroke="#000" stroke-width="0.3" letter-spacing="0.55">Thing</text>
<ellipse cx="533.3" cy="357.8" rx="29.900000000000002" ry="14.2" fill="#fafacc" stroke="#8a8a78" stroke-width="1"/>
<text x="533.3" y="360.90000000000003" text-anchor="middle" font-size="9.5" stroke="#000" stroke-width="0.3" letter-spacing="0.55">structure</text>
<ellipse cx="711.3" cy="305" rx="51.9" ry="14.2" fill="#fafacc" stroke="#8a8a78" stroke-width="1"/>
<text x="711.3" y="308.1" text-anchor="middle" font-size="9.5" stroke="#000" stroke-width="0.3" letter-spacing="0.55">type_of_openings</text>
<ellipse cx="712.1" cy="347.1" rx="44.0" ry="14.2" fill="#fafacc" stroke="#8a8a78" stroke-width="1"/>
<text x="712.1" y="350.20000000000005" text-anchor="middle" font-size="9.5" stroke="#000" stroke-width="0.3" letter-spacing="0.55">type_of_space</text>
<ellipse cx="533.2" cy="400" rx="32.9" ry="14.2" fill="#fafacc" stroke="#8a8a78" stroke-width="1"/>
<text x="533.2" y="403.1" text-anchor="middle" font-size="9.5" stroke="#000" stroke-width="0.3" letter-spacing="0.55">day_zone</text>
<ellipse cx="711.9" cy="388.6" rx="58.300000000000004" ry="14.2" fill="#fafacc" stroke="#8a8a78" stroke-width="1"/>
<text x="711.9" y="391.70000000000005" text-anchor="middle" font-size="9.5" stroke="#000" stroke-width="0.3" letter-spacing="0.55">kitchen_and_anexes</text>
<ellipse cx="711.5" cy="430.9" rx="23.0" ry="14.2" fill="#fafacc" stroke="#8a8a78" stroke-width="1"/>
<text x="711.5" y="434.0" text-anchor="middle" font-size="9.5" stroke="#000" stroke-width="0.3" letter-spacing="0.55">living</text>
<ellipse cx="711.5" cy="473.1" rx="25.0" ry="14.2" fill="#fafacc" stroke="#8a8a78" stroke-width="1"/>
<text x="711.5" y="476.20000000000005" text-anchor="middle" font-size="9.5" stroke="#000" stroke-width="0.3" letter-spacing="0.55">dining</text>
<ellipse cx="533.2" cy="441.8" rx="31.1" ry="14.2" fill="#fafacc" stroke="#8a8a78" stroke-width="1"/>
<text x="533.2" y="444.90000000000003" text-anchor="middle" font-size="9.5" stroke="#000" stroke-width="0.3" letter-spacing="0.55">architect</text>
<ellipse cx="533.6" cy="514.8" rx="36.4" ry="14.2" fill="#fafacc" stroke="#8a8a78" stroke-width="1"/>
<text x="533.6" y="517.9" text-anchor="middle" font-size="9.5" stroke="#000" stroke-width="0.3" letter-spacing="0.55">night_zone</text>
<ellipse cx="711.5" cy="514.8" rx="26.8" ry="14.2" fill="#fafacc" stroke="#8a8a78" stroke-width="1"/>
<text x="711.5" y="517.9" text-anchor="middle" font-size="9.5" stroke="#000" stroke-width="0.3" letter-spacing="0.55">parents</text>
<ellipse cx="711.8" cy="556.8" rx="29.200000000000003" ry="14.2" fill="#fafacc" stroke="#8a8a78" stroke-width="1"/>
<text x="711.8" y="559.9" text-anchor="middle" font-size="9.5" stroke="#000" stroke-width="0.3" letter-spacing="0.55">children</text>
</g></svg>
<!--/GRAPH-->
</body></html>
